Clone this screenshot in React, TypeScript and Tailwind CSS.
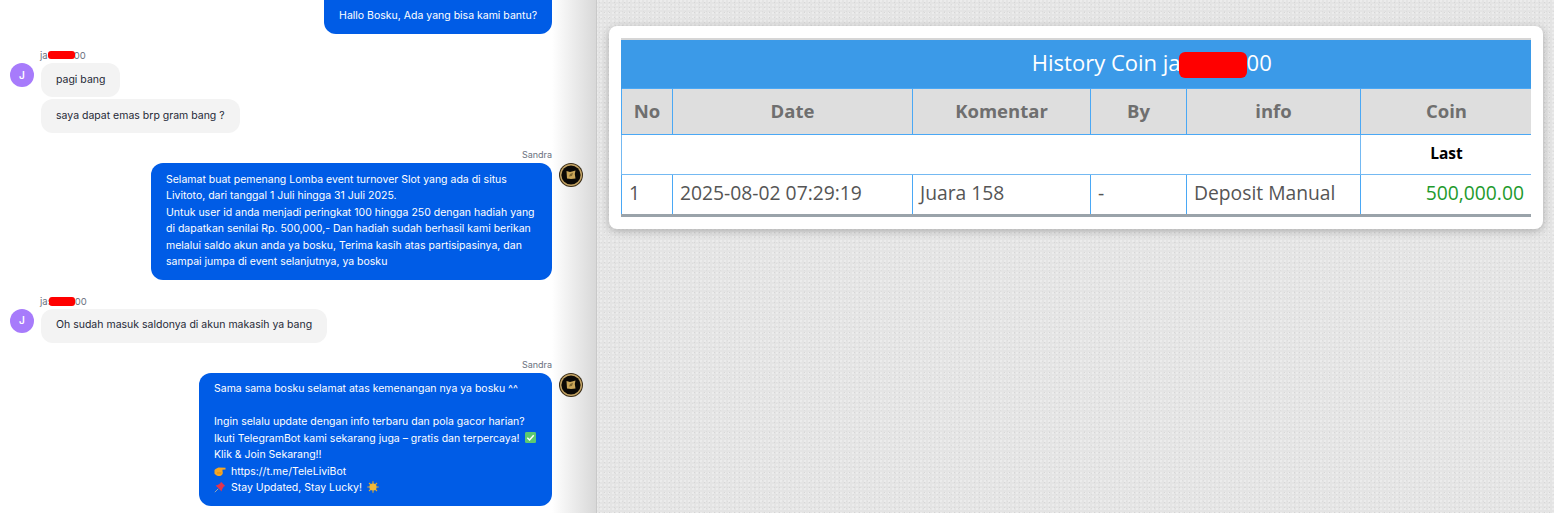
const inter = "font-['Inter',sans-serif]";

function Redact({ className }: { className: string }) {
  return <span className={`absolute bg-[#ff0000] ${className}`} />;
}

function UserAvatar() {
  return (
    <div className="flex h-6 w-6 shrink-0 items-center justify-center rounded-full bg-[#a77bfb] text-[10px] font-semibold text-white">
      J
    </div>
  );
}

function StaffAvatar() {
  return (
    <svg viewBox="0 0 24 24" className="relative z-10 h-6 w-6 shrink-0">
      <circle cx="12" cy="12" r="12" fill="#3a2d18" />
      <circle cx="12" cy="12" r="11" fill="#c4a465" />
      <circle cx="12" cy="12" r="9.6" fill="#0b0906" />
      <path d="M7.5 8 L11 9 L13 8.5 L16.5 7.5 L15.8 11 L16.5 15.5 L12 16 L8 15.5 Z" fill="#c9a558" />
      <path d="M11 11 L14 9.8 L13 13 L10 13.5 Z" fill="#7d6530" />
    </svg>
  );
}

function UserGroup({ prefix, redact, gap, messages, mt }: { prefix: string; redact: string; gap: string; messages: string[]; mt: string }) {
  return (
    <div className={`flex flex-col ${mt}`}>
      <div className="relative ml-[30px] text-[9.5px] leading-[15px] text-[#6b7280]">
        {prefix}
        <span className={`inline-block ${gap}`} />
        00
        <Redact className={redact} />
      </div>
      <div className="flex gap-[7px]">
        <UserAvatar />
        <div className="flex flex-col items-start gap-0.5">
          {messages.map((m) => (
            <div key={m} className="rounded-xl bg-[#f3f3f3] px-[15px] py-[8.75px] text-[10.5px] leading-[16.5px] text-[#1f2937]">
              {m}
            </div>
          ))}
        </div>
      </div>
    </div>
  );
}

function StaffGroup({ children, width, mt }: { children: React.ReactNode; width: string; mt: string }) {
  return (
    <div className={`flex flex-col ${mt}`}>
      <div className="mb-0.5 mr-[31px] self-end text-[9px] leading-[12px] text-[#6b7280]">Sandra</div>
      <div className="flex justify-end gap-[7px]">
        <div className={`rounded-xl bg-[#005ce6] px-[15px] py-[8.75px] text-[10.5px] leading-[16.5px] text-white ${width}`}>
          {children}
        </div>
        <StaffAvatar />
      </div>
    </div>
  );
}

function Check() {
  return (
    <svg viewBox="0 0 12 12" className="ml-0.5 inline-block h-[11px] w-[11px] align-[-1px]">
      <rect width="12" height="12" rx="1.5" fill="#5cc96f" />
      <path d="M2.5 6.2 L5 8.7 L9.5 3.5" fill="none" stroke="#fff" strokeWidth="1.6" />
    </svg>
  );
}

function Hand() {
  return (
    <svg viewBox="0 0 12 12" className="mr-[5px] inline-block h-3 w-3 align-[-2px]">
      <path d="M0.5 5 C2 3.8 3 3.2 4.5 2.6 L11.5 2.8 L11.5 4.6 L8.4 4.8 L8.8 8 C8.8 10.4 6 11.4 4 11 C2 10.4 1.2 9.4 0.5 8.8 Z" fill="#f5a623" />
      <path d="M3 8 L7.5 8" stroke="#c77a12" strokeWidth="0.6" />
    </svg>
  );
}

function Pin() {
  return (
    <svg viewBox="0 0 12 12" className="mr-[5px] inline-block h-3 w-3 align-[-2px]">
      <path d="M7 0.8 L11.2 5 L9.8 5.6 L8 8.5 L7.6 10.6 L1.6 4.4 L3.6 4 L6.4 2.2 Z" fill="#e0344e" />
      <path d="M4.2 7.8 L0.8 11.2" stroke="#9aa5ad" strokeWidth="1" />
    </svg>
  );
}

function Sun() {
  return (
    <svg viewBox="0 0 12 12" className="ml-0.5 inline-block h-3 w-3 align-[-2px]">
      <g stroke="#e0a92e" strokeWidth="1.1">
        <path d="M6 0.3 V11.7 M0.3 6 H11.7 M2 2 L10 10 M10 2 L2 10" />
      </g>
      <circle cx="6" cy="6" r="3.6" fill="#f0b93a" />
    </svg>
  );
}

const th = "border border-[#4aa8f5] bg-[#dedede] text-center font-bold text-[18.5px] text-[#6f6f6f]";
const td = "border border-[#4aa8f5] px-[7px] pb-[1px] text-left text-[19.3px]";

export default function App() {
  return (
    <div className={`flex h-[513px] w-[1554px] overflow-hidden ${inter}`}>
      <div className="relative flex w-[597px] shrink-0 flex-col border-r border-[#c9c9c9] bg-white pl-2.5 pr-[13px]">
        <div className="flex h-[34px] shrink-0 justify-end pr-[31px]">
          <div className="rounded-b-xl bg-[#005ce6] px-[15px] pt-2 text-[10.5px] leading-[16.5px] text-white">
            Hallo Bosku, Ada yang bisa kami bantu?
          </div>
        </div>
        <UserGroup
          mt="mt-[14px]"
          prefix="ja"
          gap="w-[26px]"
          redact="left-[8px] top-[3px] h-[8px] w-[27px] rounded-[3px]"
          messages={["pagi bang", "saya dapat emas brp gram bang ?"]}
        />
        <StaffGroup mt="mt-[16px]" width="w-[401px]">
          Selamat buat pemenang Lomba event turnover Slot yang ada di situs
          <br />
          Livitoto, dari tanggal 1 Juli hingga 31 Juli 2025.
          <br />
          Untuk user id anda menjadi peringkat 100 hingga 250 dengan hadiah yang
          <br />
          di dapatkan senilai Rp. 500,000,- Dan hadiah sudah berhasil kami berikan
          <br />
          melalui saldo akun anda ya bosku, Terima kasih atas partisipasinya, dan
          <br />
          sampai jumpa di event selanjutnya, ya bosku
        </StaffGroup>
        <UserGroup
          mt="mt-[14px]"
          prefix="jas"
          gap="w-[22px]"
          redact="left-[9px] top-[3px] h-[9px] w-[26px] rounded-[3px]"
          messages={["Oh sudah masuk saldonya di akun makasih ya bang"]}
        />
        <StaffGroup mt="mt-[16px]" width="w-[353px]">
          Sama sama bosku selamat atas kemenangan nya ya bosku ^^
          <br />
          <br />
          Ingin selalu update dengan info terbaru dan pola gacor harian?
          <br />
          Ikuti TelegramBot kami sekarang juga – gratis dan terpercaya! <Check />
          <br />
          Klik &amp; Join Sekarang!!
          <br />
          <Hand />
          https://t.me/TeleLiviBot
          <br />
          <Pin />
          Stay Updated, Stay Lucky! <Sun />
        </StaffGroup>
        <div className="pointer-events-none absolute inset-y-0 right-0 w-[44px] bg-gradient-to-r from-transparent to-[#d8d8d8]" />
      </div>

      <div className="min-w-0 flex-1 bg-[#e4e4e4] bg-[radial-gradient(#d6d6d6_0.7px,transparent_1px),radial-gradient(#ececec_0.7px,transparent_1px),radial-gradient(#dcdcdc_0.6px,transparent_1px)] bg-[length:5px_5px,4px_4px,7px_7px] bg-[position:0_0,2px_3px,1px_1px] pl-3 pr-[11px] pt-[26px]">
        <div className="h-[203px] rounded-lg bg-white p-3 shadow-[0_2px_8px_rgba(0,0,0,0.25)]">
          <div className="h-[179px] overflow-hidden border-t-2 border-b-[3px] border-t-[#d6d6d6] border-b-[#9aa3aa] font-['Open_Sans',sans-serif]">
            <table className="w-[1060px] table-fixed border-collapse">
              <colgroup>
                <col className="w-[51px]" />
                <col className="w-[240px]" />
                <col className="w-[178px]" />
                <col className="w-[96px]" />
                <col className="w-[174px]" />
                <col className="w-[172px]" />
                <col className="w-[149px]" />
              </colgroup>
              <thead>
                <tr className="h-[48px] bg-[#3b9ae8]">
                  <th colSpan={7} className="border-l border-[#3b9ae8] pb-[2px] text-center text-[22px] font-normal text-white">
                    <span className="relative">
                      History Coin ja
                      <span className="inline-block w-[66px]" />
                      00
                      <Redact className="right-[25px] top-[5px] h-[26px] w-[68px] rounded-[6px]" />
                    </span>
                  </th>
                </tr>
                <tr className="h-[46px]">
                  <th className={th}>No</th>
                  <th className={th}>Date</th>
                  <th className={th}>Komentar</th>
                  <th className={th}>By</th>
                  <th className={th}>info</th>
                  <th className={th}>Coin</th>
                  <th className={th} />
                </tr>
              </thead>
              <tbody>
                <tr className="h-[40px]">
                  <td colSpan={5} className="border border-[#74b9f2]" />
                  <td className="border border-[#74b9f2] text-center text-[15.5px] font-bold text-black">Last</td>
                  <td className="border border-[#74b9f2]" />
                </tr>
                <tr className="h-[40px]">
                  <td className={`${td} text-[#555]`}>1</td>
                  <td className={`${td} text-[#555]`}>2025-08-02 07:29:19</td>
                  <td className={`${td} text-[#555]`}>Juara 158</td>
                  <td className={`${td} text-[#555]`}>-</td>
                  <td className={`${td} text-[#555]`}>Deposit Manual</td>
                  <td className="border border-[#4aa8f5] px-2 pb-[1px] text-right text-[19.3px] text-[#1e9a2d]">500,000.00</td>
                  <td className={td} />
                </tr>
              </tbody>
            </table>
          </div>
        </div>
      </div>
    </div>
  );
}
